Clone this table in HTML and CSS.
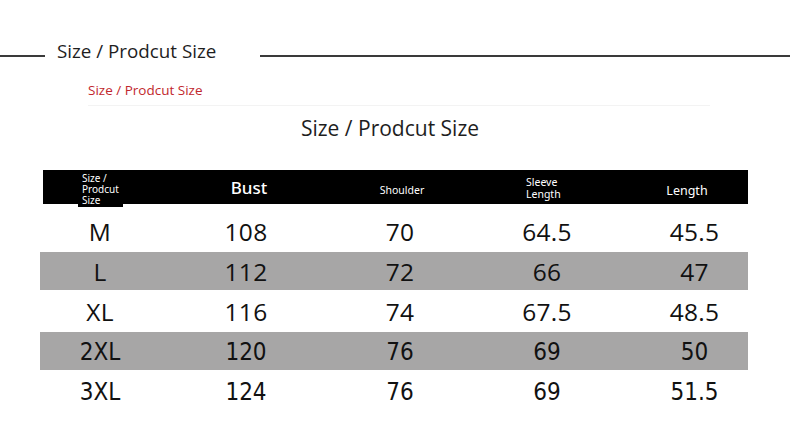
FILE: index.html
```html
<!DOCTYPE html>
<html>
<head>
<meta charset="utf-8">
<link rel="stylesheet" href="styles.css">
</head>
<body>
<div class="page">
  <div class="top-title">
    <span class="rule rule-left"></span>
    <span class="top-text">Size / Prodcut Size</span>
    <span class="rule rule-right"></span>
  </div>
  <div class="red-title">Size / Prodcut Size</div>
  <div class="mid-title">Size / Prodcut Size</div>

  <div class="table">
    <div class="head">
      <div class="hc hc-size">Size /<br>Prodcut<br><span class="tab">Size</span></div>
      <div class="hc hc-bust">Bust</div>
      <div class="hc hc-small hc-shoulder">Shoulder</div>
      <div class="hc hc-small hc-sleeve">Sleeve<br>Length</div>
      <div class="hc hc-length">Length</div>
    </div>
    <div class="row"><div>M</div><div>108</div><div>70</div><div>64.5</div><div>45.5</div></div>
    <div class="row grey"><div>L</div><div>112</div><div>72</div><div>66</div><div>47</div></div>
    <div class="row"><div>XL</div><div>116</div><div>74</div><div>67.5</div><div>48.5</div></div>
    <div class="row grey narrow"><div>2XL</div><div>120</div><div>76</div><div>69</div><div>50</div></div>
    <div class="row narrow"><div>3XL</div><div>124</div><div>76</div><div>69</div><div>51.5</div></div>
  </div>
</div>
</body>
</html>
```

FILE: styles.css
```css
* { box-sizing: border-box; }
html, body { margin: 0; padding: 0; background: #fff; }
body { font-family: "Open Sans", "Noto Sans", sans-serif; color: #111; width: 790px; height: 433px; overflow: hidden; }

.page { padding-top: 39px; }

.top-title {
  display: flex;
  align-items: center;
  height: 24px;
}
.rule { display: block; height: 2px; background: #3a3a3a; margin-top: 10px; }
.rule-left { width: 45px; }
.rule-right { flex: 1; margin-left: 44px; }
.top-text {
  font-family: "Open Sans", sans-serif;
  font-size: 18.8px;
  line-height: 24px;
  color: #1e1e1e;
  margin-left: 12px;
}

.red-title {
  margin-top: 18px;
  margin-left: 88px;
  width: 622px;
  font-size: 13.5px;
  line-height: 18px;
  color: #c1272d;
  padding-bottom: 6px;
  border-bottom: 1px solid #f3f3f3;
}

.mid-title {
  margin-top: 8px;
  text-align: center;
  font-size: 21px;
  line-height: 28px;
  color: #1e1e1e;
  padding-right: 10px;
}

.table {
  margin-top: 28px;
  margin-left: 40px;
  width: 708px;
}
.head, .row {
  display: grid;
  grid-template-columns: 117px 178px 130px 164px 1fr;
  align-items: center;
}
.head {
  margin-left: 3px;
  height: 34px;
  background: #000;
  color: #fff;
  font-family: "Noto Sans", sans-serif;
}
.hc { text-align: center; padding-top: 3px; }
.hc-size {
  font-size: 10px;
  line-height: 11px;
  text-align: left;
  padding-left: 39px;
  padding-top: 3px;
  align-self: start;
}
.tab {
  display: inline-block;
  width: 45px;
  margin-left: -4px;
  padding-left: 4px;
  background: #000;
  line-height: 11px;
  padding-bottom: 1px;
}
.hc-bust { font-size: 17px; font-weight: 500; padding-top: 0; margin-top: -2px; }
.hc-small { font-size: 10.5px; line-height: 12px; }
.hc-shoulder { padding-right: 2px; }
.hc-sleeve { text-align: left; padding-left: 58px; padding-top: 0; margin-top: -1px; }
.hc-length { font-size: 12.5px; padding-right: 6px; }

.row {
  height: 38px;
  margin-top: 2px;
  font-size: 24.5px;
  color: #111;
  letter-spacing: 0.3px;
}
.head + .row { margin-top: 8px; }
.row > div { text-align: center; padding-top: 1px; }
.row > div:last-child { padding-left: 12px; }
.row > div:first-child { padding-left: 3px; }
.grey { background: #a7a6a6; }
.narrow { font-family: "DejaVu Sans Condensed", "DejaVu Sans", sans-serif; font-stretch: condensed; font-size: 24px; letter-spacing: 0; }
```
